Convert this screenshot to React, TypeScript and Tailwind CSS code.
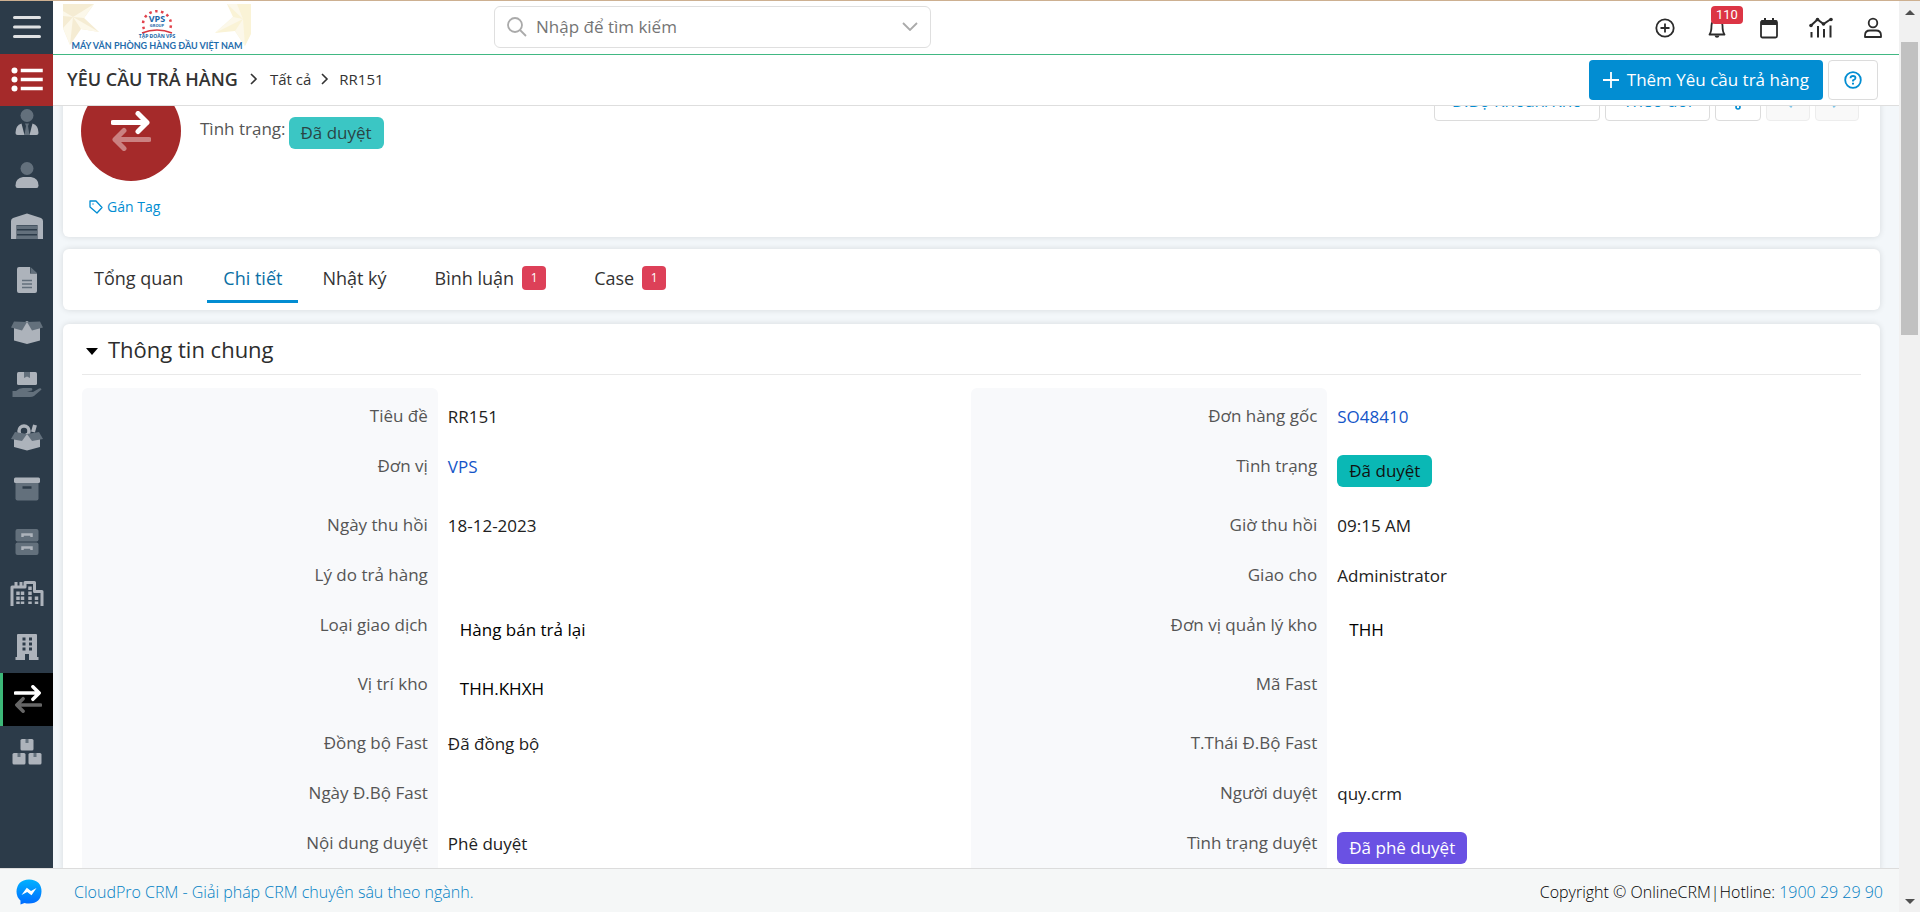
import type { ReactNode } from 'react';

const LIGHT = '#adb3bb';
const DIM = '#63707c';

function RailIcon({ children }: { children: ReactNode }) {
  return (
    <svg viewBox="-17 -14 34 28" className="w-[34px] h-7" aria-hidden="true">
      {children}
    </svg>
  );
}

function SwapArrows({ back, className }: { back: string; className: string }) {
  return (
    <svg viewBox="0 0 40 40" className={className} fill="none" strokeWidth="5" aria-hidden="true">
      <g stroke={back} strokeLinecap="round" strokeLinejoin="round">
        <path d="M38 28.5H4M13 19.5L4 28.5L13 37.5" />
      </g>
      <g stroke="#fff" strokeLinecap="round" strokeLinejoin="round">
        <path d="M2 11.5H36M27 2.5L36 11.5L27 20.5" />
      </g>
    </svg>
  );
}

const boxBody = (
  <>
    <path d="M-13 -4L0 -11L13 -4V8.500L0 12L-13 8.500Z" fill={LIGHT} />
    <path d="M0 -10L-5 -1.500L-16 -4.500L-13 -10.500Z" fill={DIM} />
    <path d="M0 -10L5 -1.500L16 -4.500L13 -10.500Z" fill={DIM} />
  </>
);

const parcel = (x: number, y: number) => (
  <g key={`${x},${y}`}>
    <rect x={x} y={y} width="13" height="11.500" rx="1.500" fill={LIGHT} />
    <rect x={x + 5} y={y} width="3" height="4" fill={DIM} />
  </g>
);

const railItems: { label: string; active?: boolean; icon: ReactNode }[] = [
  {
    label: 'Khách hàng',
    icon: (
      <RailIcon>
        <circle cy="-6.500" r="6.500" fill={DIM} />
        <path d="M-2 1.500H2L1 4L2.500 13H-2.500L-1 4Z" fill={DIM} />
        <path d="M-5.500 1.500L-2.500 13H-9.500Q-11.500 13 -11.500 11Q-11.500 3 -5.500 1.500Z" fill={LIGHT} />
        <path d="M5.500 1.500L2.500 13H9.500Q11.500 13 11.500 11Q11.500 3 5.500 1.500Z" fill={LIGHT} />
      </RailIcon>
    ),
  },
  {
    label: 'Người liên hệ',
    icon: (
      <RailIcon>
        <circle cy="-6.500" r="6.500" fill={DIM} />
        <path d="M-4 2H4Q11.500 3 11.500 10.500Q11.500 13 9.500 13H-9.500Q-11.500 13 -11.500 10.500Q-11.500 3 -4 2Z" fill={LIGHT} />
      </RailIcon>
    ),
  },
  {
    label: 'Kho',
    icon: (
      <RailIcon>
        <path d="M-16 12V-6Q-16 -8 -14 -9L0 -13.500L14 -9Q16 -8 16 -6V12H10.500V-2H-10.500V12Z" fill={LIGHT} />
        <path d="M-10 -1.500H10V2H-10ZM-10 3.500H10V7H-10ZM-10 8.500H10V12H-10Z" fill={DIM} />
      </RailIcon>
    ),
  },
  {
    label: 'Báo giá',
    icon: (
      <RailIcon>
        <path d="M-8 -13H3V-6.500H10V11Q10 13 8 13H-8Q-10 13 -10 11V-11Q-10 -13 -8 -13Z" fill={LIGHT} />
        <path d="M3.500 -13L10 -7H3.500Z" fill={DIM} />
        <path d="M-5 0.500H5M-5 4H5M-5 7.500H5" stroke={DIM} strokeWidth="1.500" />
      </RailIcon>
    ),
  },
  { label: 'Sản phẩm', icon: <RailIcon>{boxBody}</RailIcon> },
  {
    label: 'Giao hàng',
    icon: (
      <RailIcon>
        <rect x="-10" y="-13" width="20" height="13" rx="1.500" fill={LIGHT} />
        <path d="M-3 -13H3V-7L0 -8.500L-3 -7Z" fill={DIM} />
        <path d="M-14.500 6H-11Q-8 3 -4 3H4Q6 3 5 5.500L0 6.500L6 7L12 3.500Q14 2.500 14.500 4.500L7 11Q5.500 12 3 12H-14.500Z" fill={DIM} />
      </RailIcon>
    ),
  },
  {
    label: 'Nhập kho',
    icon: (
      <RailIcon>
        <circle cx="-3" cy="-6" r="5" fill="none" stroke={LIGHT} strokeWidth="3.500" />
        <path d="M6 -5L8 -12" stroke={LIGHT} strokeWidth="4" />
        <path d="M-13 2L0 -4L13 2V10L0 13.500L-13 10Z" fill={LIGHT} />
        <path d="M0 -3L-5 4L-16 2L-12 -5Z" fill={DIM} />
        <path d="M0 -3L5 4L16 2L12 -5Z" fill={DIM} />
      </RailIcon>
    ),
  },
  {
    label: 'Xuất kho',
    icon: (
      <RailIcon>
        <path d="M-11.500 -6H11.500V9.500Q11.500 11.500 9.500 11.500H-9.500Q-11.500 11.500 -11.500 9.500Z" fill={DIM} />
        <rect x="-13" y="-11.500" width="26" height="5.500" rx="1.500" fill={LIGHT} />
        <path d="M-4.500 -1.500H4.500" stroke="#2c3b49" strokeWidth="2.500" />
      </RailIcon>
    ),
  },
  {
    label: 'Tồn kho',
    icon: (
      <RailIcon>
        <rect x="-11.500" y="-13" width="23" height="12.500" rx="2" fill={DIM} />
        <rect x="-11.500" y="0.500" width="23" height="12.500" rx="2" fill={DIM} />
        <path d="M-4.500 -5V-7.500H4.500V-5M-4.500 8V5.500H4.500V8" stroke={LIGHT} strokeWidth="2.500" fill="none" />
      </RailIcon>
    ),
  },
  {
    label: 'Chi nhánh',
    icon: (
      <RailIcon>
        <path
          d="M-15 12V-7H-2V-11.500H7.500V-2.500H15V12M-11 -7V-12M-6 -7V-12"
          fill="none"
          stroke={LIGHT}
          strokeWidth="3"
          strokeLinejoin="round"
        />
        <path
          d="M-9 -2.500V10M-4.500 -2.500V10M3 -7.500V10M9.500 2.500V10"
          stroke={LIGHT}
          strokeWidth="3.500"
          strokeDasharray="3.500 1.500"
        />
      </RailIcon>
    ),
  },
  {
    label: 'Công ty',
    icon: (
      <RailIcon>
        <path d="M-9 -13H9Q10 -13 10 -12V10H11.500V13H2V7H-2V13H-11.500V10H-10V-12Q-10 -13 -9 -13Z" fill={LIGHT} />
        <path
          d="M-3 -9.500V4M3.500 -9.500V4"
          stroke="#2c3b49"
          strokeWidth="3"
          strokeDasharray="3 2"
        />
      </RailIcon>
    ),
  },
  { label: 'Yêu cầu trả hàng', active: true, icon: <SwapArrows back="#666" className="w-7 h-7" /> },
  {
    label: 'Lô hàng',
    icon: <RailIcon>{[parcel(-6.5, -13), parcel(-14.5, 1), parcel(1.5, 1)]}</RailIcon>,
  },
];

const tabs = [
  { label: 'Tổng quan' },
  { label: 'Chi tiết', active: true },
  { label: 'Nhật ký' },
  { label: 'Bình luận', count: 1 },
  { label: 'Case', count: 1 },
];

type Field = { label: string; value?: string; kind?: 'link' | 'teal' | 'violet' | 'inset' };

const rows: { tall?: boolean; fields: [Field, Field] }[] = [
  { fields: [{ label: 'Tiêu đề', value: 'RR151' }, { label: 'Đơn hàng gốc', value: 'SO48410', kind: 'link' }] },
  { tall: true, fields: [{ label: 'Đơn vị', value: 'VPS', kind: 'link' }, { label: 'Tình trạng', value: 'Đã duyệt', kind: 'teal' }] },
  { fields: [{ label: 'Ngày thu hồi', value: '18-12-2023' }, { label: 'Giờ thu hồi', value: '09:15 AM' }] },
  { fields: [{ label: 'Lý do trả hàng' }, { label: 'Giao cho', value: 'Administrator' }] },
  { tall: true, fields: [{ label: 'Loại giao dịch', value: 'Hàng bán trả lại', kind: 'inset' }, { label: 'Đơn vị quản lý kho', value: 'THH', kind: 'inset' }] },
  { tall: true, fields: [{ label: 'Vị trí kho', value: 'THH.KHXH', kind: 'inset' }, { label: 'Mã Fast' }] },
  { fields: [{ label: 'Đồng bộ Fast', value: 'Đã đồng bộ' }, { label: 'T.Thái Đ.Bộ Fast' }] },
  { fields: [{ label: 'Ngày Đ.Bộ Fast' }, { label: 'Người duyệt', value: 'quy.crm' }] },
  { tall: true, fields: [{ label: 'Nội dung duyệt', value: 'Phê duyệt' }, { label: 'Tình trạng duyệt', value: 'Đã phê duyệt', kind: 'violet' }] },
];

function FieldValue({ value, kind }: Field) {
  if (!value) return null;
  if (kind === 'link') return <a href="#" className="text-[#1455c8]">{value}</a>;
  if (kind === 'teal') return <span className="inline-block rounded-md bg-[#0ab8b5] px-3 py-1 text-[#111]">{value}</span>;
  if (kind === 'violet') return <span className="inline-block rounded-md bg-[#6a51e3] px-3 py-1 text-white">{value}</span>;
  if (kind === 'inset') return <span className="inline-block px-3 py-1 text-black">{value}</span>;
  return <>{value}</>;
}

function Logo() {
  return (
    <svg viewBox="0 0 188 48" className="w-[188px] h-12" role="img" aria-label="VPS Group">
      <g fill="#f5ecd3">
        <path d="M0 0H31L21 14L36 28L18 25L7 41L0 24Z" />
        <path d="M188 0H164L170 13L152 29L172 27L182 42L188 30Z" fill="#faf3d6" />
      </g>
      <g fill="#fcf8ea">
        <path d="M10 13L31 0L21 14ZM10 13L36 28L18 25ZM10 13L7 41L0 24ZM10 13L0 12V7Z" />
        <path d="M180 15L164 0H174ZM180 15L152 29L170 13ZM180 15L182 42L172 27Z" />
      </g>
      <path d="M81 25A14 13 0 1 1 107 25" fill="none" stroke="#e2434c" strokeWidth="2.500" strokeDasharray="2.500 3.500" />
      <path d="M79 29Q94 23 109 29" fill="none" stroke="#d9363f" strokeWidth="1.500" />
      <g fontFamily='"Open Sans", sans-serif' fontWeight="700" textAnchor="middle" fill="#1b66a8">
        <text x="94" y="18" fontSize="9">VPS</text>
        <text x="94" y="23" fontSize="4">GROUP</text>
        <text x="94" y="34" fontSize="5">TẬP ĐOÀN VPS</text>
      </g>
      <text x="94" y="45" fontSize="9" fontFamily="Lato, sans-serif" fontWeight="700" textAnchor="middle" fill="#1f6cac">
        MÁY VĂN PHÒNG HÀNG ĐẦU VIỆT NAM
      </text>
    </svg>
  );
}

function Chevron({ className, flip }: { className: string; flip?: boolean }) {
  return (
    <svg viewBox="0 0 8 12" className={className} fill="none" stroke="currentColor" strokeWidth="1.600" aria-hidden="true">
      <path d={flip ? 'M7 1L2 6L7 11' : 'M1 1L6 6L1 11'} />
    </svg>
  );
}

function TopBar() {
  return (
    <header className="flex items-center h-[54px] shrink-0 border-b border-[#41b883] bg-white pl-[10px] pr-[14px]">
      <Logo />
      <div className="ml-[243px] flex items-center w-[437px] h-[42px] mb-0.5 border border-[#dfdfdf] rounded-md px-3">
        <svg viewBox="0 0 20 20" className="w-5 h-5 shrink-0" fill="none" stroke="#aaa" strokeWidth="1.800" aria-hidden="true">
          <circle cx="8" cy="8" r="7" />
          <path d="M13 13L19 19" />
        </svg>
        <input
          type="text"
          aria-label="Tìm kiếm"
          placeholder="Nhập để tìm kiếm"
          className="flex-1 min-w-0 ml-[9px] text-[17px] placeholder:text-[#757575] outline-none"
        />
        <button aria-label="Tùy chọn tìm kiếm">
          <svg viewBox="0 0 16 9" className="w-4 h-[9px]" fill="none" stroke="#aaa" strokeWidth="1.800">
            <path d="M1 1L8 8L15 1" />
          </svg>
        </button>
      </div>
      <div className="ml-auto flex items-center gap-7 text-[#2b2b2b]">
        <button aria-label="Thêm mới">
          <svg viewBox="0 0 24 24" className="w-6 h-6" fill="none" stroke="currentColor" strokeWidth="1.800">
            <circle cx="12" cy="12" r="8.700" />
            <path d="M12 7.500V16.500M7.500 12H16.500" />
          </svg>
        </button>
        <button aria-label="Thông báo" className="relative">
          <svg viewBox="0 0 24 24" className="w-6 h-6" fill="none" stroke="currentColor" strokeWidth="1.800">
            <path d="M4.500 18.500Q6.500 16 6.500 9.500Q6.500 4.500 12 4.500Q17.500 4.500 17.500 9.500Q17.500 16 19.500 18.500Z" strokeLinejoin="round" />
            <path d="M9.500 19.500H14.500Q14 21.800 12 21.800Q10 21.800 9.500 19.500Z" fill="currentColor" stroke="none" />
          </svg>
          <span className="absolute left-[6px] -top-[10px] h-[18px] px-[5px] rounded bg-[#dc3545] font-[Roboto,sans-serif] text-[13px] leading-[18px] text-white">
            110
          </span>
        </button>
        <button aria-label="Lịch">
          <svg viewBox="0 0 24 24" className="w-6 h-6" fill="none" stroke="currentColor" strokeWidth="1.800">
            <rect x="4" y="5" width="16" height="16.500" rx="1.500" />
            <path d="M4 4.500H20V9H4Z" fill="currentColor" stroke="none" />
            <path d="M8 2V5M16 2V5" strokeWidth="2" />
          </svg>
        </button>
        <button aria-label="Báo cáo">
          <svg viewBox="0 0 24 24" className="w-6 h-6" fill="none" stroke="currentColor" strokeWidth="2">
            <path d="M2 9.500L8.500 3.500L14.500 8L22 3" />
            <path d="M2.500 16V21.500M9 10V21.500M15 13V21.500M21.500 9.500V21.500" />
            <g fill="currentColor" stroke="none">
              <circle cx="2" cy="9.500" r="1.800" />
              <circle cx="8.500" cy="3.500" r="1.800" />
              <circle cx="14.500" cy="8" r="1.800" />
              <circle cx="22" cy="3.500" r="1.800" />
            </g>
          </svg>
        </button>
        <button aria-label="Tài khoản">
          <svg viewBox="0 0 24 24" className="w-6 h-6" fill="none" stroke="currentColor" strokeWidth="1.800">
            <circle cx="12" cy="7" r="4.300" />
            <path d="M4 21V19.500Q4 14.500 9 14.500H15Q20 14.500 20 19.500V21Z" strokeLinejoin="round" />
          </svg>
        </button>
      </div>
    </header>
  );
}

function SubBar() {
  return (
    <div className="flex items-center h-[51px] shrink-0 border-b border-[#dedede] bg-white pl-[14px] pr-[21px] text-[#333]">
      <nav aria-label="Breadcrumb" className="flex items-center pb-0.5">
        <h1 className="text-lg font-semibold">YÊU CẦU TRẢ HÀNG</h1>
        <Chevron className="w-2 h-3 mx-3" />
        <a href="#" className="text-[15px]">Tất cả</a>
        <Chevron className="w-2 h-3 mx-[10px]" />
        <span className="text-[15px]">RR151</span>
      </nav>
      <button className="ml-auto flex items-center h-10 px-[14px] gap-2 rounded bg-[#028dd2] text-[17px] text-white">
        <svg viewBox="0 0 16 16" className="w-4 h-4" stroke="currentColor" strokeWidth="1.800" aria-hidden="true">
          <path d="M8 0V16M0 8H16" />
        </svg>
        Thêm Yêu cầu trả hàng
      </button>
      <button aria-label="Trợ giúp" className="ml-[5px] flex items-center justify-center w-[50px] h-10 rounded border border-[#dcdcdc] text-[#028dd2]">
        <svg viewBox="0 0 18 18" className="w-[18px] h-[18px]" fill="none" stroke="currentColor" strokeWidth="1.800">
          <circle cx="9" cy="9" r="7.800" />
          <path d="M6.500 7.200Q6.500 5 9 5Q11.500 5 11.500 7Q11.500 8.500 9 9.300V10.500" />
          <path d="M9 11.700V13.500" strokeWidth="2" />
        </svg>
      </button>
    </div>
  );
}

function SummaryCard() {
  const outline = 'flex items-center justify-center h-10 rounded border border-[#dcdcdc] text-[17px] text-[#028dd2]';
  return (
    <section className="flex items-start h-44 pt-5 pl-[18px] pr-[21px] rounded-md bg-white shadow-[0_0_6px_rgba(0,0,0,0.12)]">
      <div className="flex flex-col">
        <div className="flex items-center justify-center w-[100px] h-[100px] rounded-full bg-[#a52a2a]">
          <SwapArrows back="#cb8181" className="w-10 h-10" />
        </div>
        <button className="flex items-center gap-1 mt-4 ml-2 text-sm text-[#028dd2]">
          <svg viewBox="0 0 14 14" className="w-[14px] h-[14px]" fill="none" stroke="currentColor" strokeWidth="1.300" aria-hidden="true">
            <path d="M1 1H7L13 7.500L8 13L1 7Z" strokeLinejoin="round" />
            <circle cx="4" cy="4" r="0.700" fill="currentColor" stroke="none" />
          </svg>
          Gán Tag
        </button>
      </div>
      <p className="flex items-start gap-[3px] mt-9 ml-[19px] text-[17px] leading-6 text-[#555]">
        Tình trạng:
        <span className="rounded-md bg-[#3bc6c4] px-3 py-1 text-[#2a4545]">Đã duyệt</span>
      </p>
      <div className="ml-auto flex gap-[5px]">
        <button className={`${outline} w-[166px]`}>Đ.Bộ Khoản/Kho</button>
        <button className={`${outline} w-[105px]`}>Theo dõi</button>
        <button aria-label="Thêm" className={`${outline} w-[46px]`}>
          <svg viewBox="0 0 6 18" className="w-[6px] h-[18px]" fill="none" stroke="currentColor" strokeWidth="1.600">
            <circle cx="3" cy="3" r="2" />
            <circle cx="3" cy="9" r="2" />
            <circle cx="3" cy="15" r="2" />
          </svg>
        </button>
        <button aria-label="Trước" disabled className={`${outline} w-11 bg-[#f5f5f5] opacity-50`}>
          <Chevron flip className="w-[10px] h-4" />
        </button>
        <button aria-label="Sau" disabled className={`${outline} w-11 bg-[#f5f5f5] opacity-50`}>
          <Chevron className="w-[10px] h-4" />
        </button>
      </div>
    </section>
  );
}

function TabBar() {
  return (
    <nav className="flex gap-2 h-[61px] mt-3 pl-[15px] rounded-md bg-white shadow-[0_0_6px_rgba(0,0,0,0.12)]">
      {tabs.map(({ label, active, count }) => (
        <a
          key={label}
          href="#"
          className={`flex items-center h-[54px] px-4 pt-[6px] border-b-3 text-lg font-medium ${
            active ? 'border-[#028dd2] text-[#0b6fa4]' : 'border-transparent text-[#333]'
          } ${count ? 'ml-2 gap-2' : ''}`}
        >
          {label}
          {count && (
            <span className="w-6 h-6 rounded bg-[#dd4058] text-center text-xs leading-6 text-white">{count}</span>
          )}
        </a>
      ))}
    </nav>
  );
}

function DetailCard() {
  return (
    <section className="mt-[14px] px-[19px] rounded-md bg-white shadow-[0_0_6px_rgba(0,0,0,0.12)]">
      <h2 className="border-b border-[#e9e9e9] text-[22px] font-medium text-[#2d2d2d]">
        <button className="flex items-center gap-[10px] h-[50px] pl-1">
          <svg viewBox="0 0 12 7" className="w-3 h-[7px] mt-1" aria-hidden="true">
            <path d="M0 0H12L6 7Z" />
          </svg>
          Thông tin chung
        </button>
      </h2>
      <table className="w-full mt-[13px] table-fixed border-separate border-spacing-0 text-[17px] leading-6">
        <colgroup>
          <col className="w-1/5" />
          <col className="w-[30%]" />
          <col className="w-1/5" />
          <col className="w-[30%]" />
        </colgroup>
        <tbody>
          {rows.map(({ tall, fields }, i) => (
            <tr key={fields[0].label} className={tall ? 'h-[59px]' : 'h-[50px]'}>
              {fields.flatMap((field) => [
                <th
                  key={field.label}
                  scope="row"
                  className={`${i === 0 ? 'rounded-t-md' : ''} bg-[#f8f9fb] pt-4 pr-[10px] align-top text-right font-normal text-[#555]`}
                >
                  {field.label}
                </th>,
                <td key={`${field.label}-value`} className="pt-[17px] pl-[10px] align-top text-[#212121]">
                  <FieldValue {...field} />
                </td>,
              ])}
            </tr>
          ))}
        </tbody>
      </table>
    </section>
  );
}

function Rail() {
  return (
    <aside className="flex flex-col w-[53px] shrink-0 overflow-hidden bg-[#2c3b49]">
      <button aria-label="Menu" className="flex items-center justify-center h-[53px] pb-0.5 shrink-0">
        <svg viewBox="0 0 28 24" className="w-7 h-6" stroke="#dfe1e3" strokeWidth="3" strokeLinecap="round">
          <path d="M1.500 2.500H26.500M1.500 12H26.500M1.500 21.500H26.500" />
        </svg>
      </button>
      <button aria-label="Danh sách" className="flex items-center justify-center h-[52px] pb-0.5 shrink-0 bg-[#a52a2a]">
        <svg viewBox="0 0 32 26" className="w-8 h-[26px]" stroke="#fff" fill="#fff">
          <path d="M11.500 4.500H30M11.500 13.500H30M11.500 22.500H30" strokeLinecap="square" strokeWidth="3.500" />
          <g stroke="none">
            <circle cx="3.500" cy="4.500" r="3" />
            <circle cx="3.500" cy="13.500" r="3" />
            <circle cx="3.500" cy="22.500" r="3" />
          </g>
        </svg>
      </button>
      <nav className="flex-1 min-h-0 overflow-hidden">
        <ul className="grid grid-rows-13 h-[682px] -mt-[10px]">
          {railItems.map(({ label, active, icon }) => (
            <li key={label} className="flex">
              <a
                href="#"
                aria-label={label}
                className={
                  active
                    ? 'flex flex-1 items-center justify-center border-l-3 border-[#3cb878] bg-black'
                    : 'flex flex-1 items-center justify-center'
                }
              >
                {icon}
              </a>
            </li>
          ))}
        </ul>
      </nav>
    </aside>
  );
}

function Footer() {
  return (
    <footer className="flex items-center h-11 pt-0.5 shrink-0 border-t border-[#dcdcdc] bg-[#f5f7f7] px-4 text-base font-light text-black">
      <a href="#" aria-label="Messenger">
        <svg viewBox="0 0 26 26" className="w-[26px] h-[26px]">
          <defs>
            <linearGradient id="messenger" x1="0" y1="0" x2="0" y2="1">
              <stop offset="0" stopColor="#00b2ff" />
              <stop offset="1" stopColor="#006aff" />
            </linearGradient>
          </defs>
          <path d="M13 0.500Q25.500 1 25.500 12.500Q25 24.500 13 24.500Q10.500 24.500 8.500 24L4.500 25.500V21.500Q0.500 18 0.500 12.500Q1 1 13 0.500Z" fill="url(#messenger)" />
          <path d="M5.500 16L10.800 8.800L15 12L20.500 9L15.500 16.200L11.200 13Z" fill="#fff" />
        </svg>
      </a>
      <a href="#" className="ml-8 text-[#0280c4]">CloudPro CRM - Giải pháp CRM chuyên sâu theo ngành.</a>
      <p className="ml-auto">
        Copyright © OnlineCRM|Hotline: <a href="#" className="text-[#0280c4]">1900 29 29 90</a>
      </p>
    </footer>
  );
}

function ScrollTrack() {
  return (
    <div className="flex flex-col items-center w-[21px] shrink-0 bg-[#f1f1f1] py-2" aria-hidden="true">
      <svg viewBox="0 0 10 5" className="w-[10px] h-[5px] mt-[1px]" fill="#505050"><path d="M0 5L5 0L10 5Z" /></svg>
      <div className="w-[17px] h-[293px] mt-[27px] bg-[#c1c1c1]" />
      <svg viewBox="0 0 10 5" className="w-[10px] h-[5px] mt-auto" fill="#505050"><path d="M0 0L5 5L10 0Z" /></svg>
    </div>
  );
}

export default function App() {
  return (
    <div className="flex h-screen overflow-hidden border-t border-[#cdb091] bg-white font-['Open_Sans','Noto_Sans',sans-serif]">
      <div className="flex flex-col flex-1 min-w-0">
        <div className="flex flex-1 min-h-0">
          <Rail />
          <div className="flex flex-col flex-1 min-w-0">
            <TopBar />
            <SubBar />
            <main className="flex-1 min-h-0 overflow-hidden bg-[#f3f7fa] pl-[10px] pr-[19px]">
              {/* page is scrolled, so the first card starts above the fold */}
              <div className="-mt-[45px]">
                <SummaryCard />
                <TabBar />
                <DetailCard />
              </div>
            </main>
          </div>
        </div>
        <Footer />
      </div>
      <ScrollTrack />
    </div>
  );
}
